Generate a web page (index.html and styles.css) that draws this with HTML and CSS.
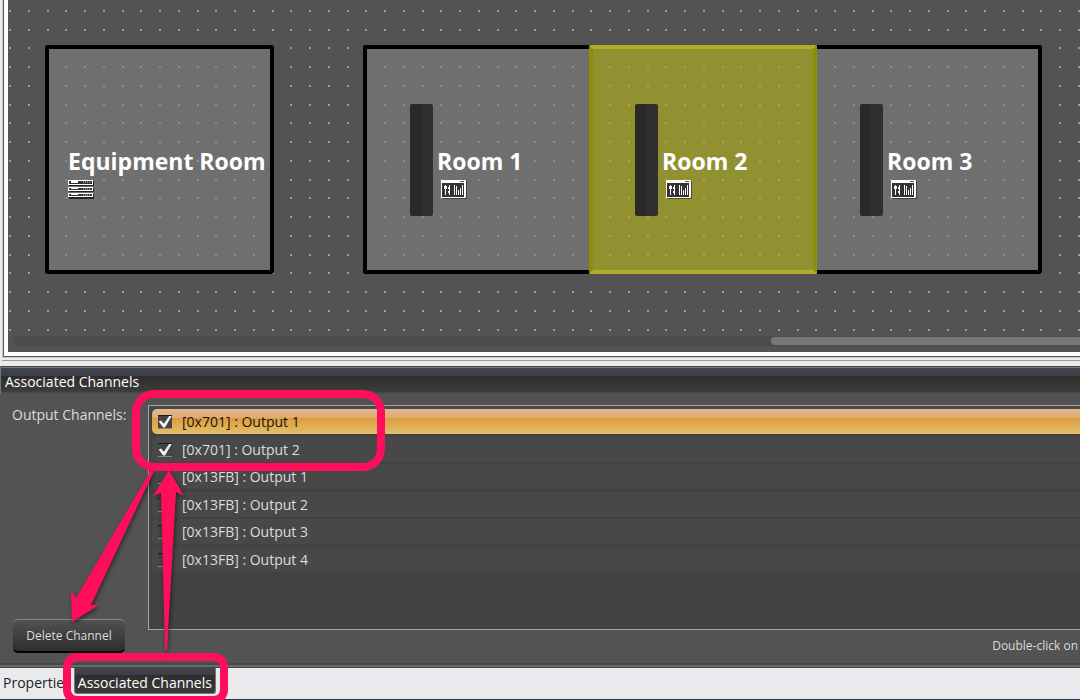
FILE: index.html
```
<!DOCTYPE html>
<html lang="en">
<head>
  <meta charset="UTF-8" />
  <meta name="viewport" content="width=device-width, initial-scale=1.0"/>
  <title>Associated Channels</title>
  <link rel="stylesheet" href="styles.css">
</head>
<body>
  <svg class="defs" width="0" height="0" aria-hidden="true">
    <symbol id="mixer" viewBox="0 0 26 20">
      <rect x="1" y="1" width="25" height="18" rx="1" fill="#222" opacity=".6"/>
      <rect width="25" height="18" rx="1" fill="#fff"/>
      <path d="M1 3h22v14H1z" fill="#333"/>
      <path d="M19 1h4v1h-4z" fill="#555"/>
      <path d="M4 5h1v10H4zM3 6h3v3H3zM8 5h1v10H8zM7 7h2v2H7zM7 11h2v2H7zM13 5h1v10h-1zM15 6h1v9h-1zM17 10h1v5h-1zM19 8h1v7h-1zM21 5h1v10h-1z" fill="#fff"/>
    </symbol>
    <symbol id="rack" viewBox="0 0 26 20">
      <path d="M1 1h25v5H1zM1 8h25v4H1zM1 14h25v5H1z" fill="#222"/>
      <path d="M0 0h25v5H0zM0 7h25v4H0zM0 13h25v4H0z" fill="#fff"/>
      <path d="M1 1h23v3H1zM1 8h23v2H1zM1 14h23v2H1z" fill="#333"/>
      <path d="M3 1h7v2H3zM3 8h7v1H3zM3 14h7v1H3z" fill="#fff"/>
      <path d="M15 2h8M15 9h8M15 15h8" stroke="#ddd" stroke-dasharray="1 1"/>
    </symbol>
  </svg>

  <main class="app">
    <section class="canvas-frame">
      <div class="canvas">
        <svg class="grid" width="100%" height="336" aria-hidden="true">
          <defs>
            <pattern id="dots" x="1" y="10" width="75" height="75" patternUnits="userSpaceOnUse">
              <g id="dot-row" fill="#9c9c9c">
                <rect x="0" width="2" height="2"/>
                <rect x="19" width="2" height="2"/>
                <rect x="38" width="2" height="2"/>
                <rect x="56" width="2" height="2"/>
              </g>
              <use href="#dot-row" y="19"/>
              <use href="#dot-row" y="37"/>
              <use href="#dot-row" y="56"/>
            </pattern>
          </defs>
          <rect width="100%" height="100%" fill="url(#dots)"/>
        </svg>

        <div class="room equipment">
          <h2>Equipment Room</h2>
          <svg class="icon"><use href="#rack"/></svg>
        </div>
        <div class="room room-1">
          <div class="device"></div>
          <div class="label">
            <h2>Room 1</h2>
            <svg class="icon"><use href="#mixer"/></svg>
          </div>
        </div>
        <div class="room room-2 selected">
          <div class="device"></div>
          <div class="label">
            <h2>Room 2</h2>
            <svg class="icon"><use href="#mixer"/></svg>
          </div>
        </div>
        <div class="room room-3">
          <div class="device"></div>
          <div class="label">
            <h2>Room 3</h2>
            <svg class="icon"><use href="#mixer"/></svg>
          </div>
        </div>

        <div class="scrollbar"><div class="thumb"></div></div>
      </div>
    </section>

    <section class="panel">
      <h1>Associated Channels</h1>
      <div class="panel-body">
        <div class="side">
          <span id="channels-label">Output Channels:</span>
          <button class="delete-btn">Delete Channel</button>
        </div>
        <div class="channels">
          <ul class="list" aria-labelledby="channels-label">
            <li class="active"><label><input type="checkbox" checked>[0x701] : Output 1</label></li>
            <li><label><input type="checkbox" checked>[0x701] : Output 2</label></li>
            <li><label><input type="checkbox">[0x13FB] : Output 1</label></li>
            <li><label><input type="checkbox">[0x13FB] : Output 2</label></li>
            <li><label><input type="checkbox">[0x13FB] : Output 3</label></li>
            <li><label><input type="checkbox">[0x13FB] : Output 4</label></li>
          </ul>
          <p class="hint">Double-click on</p>
        </div>
      </div>
    </section>

    <nav class="tabs">
      <button class="tab">Properties</button>
      <button class="tab current">Associated Channels</button>
    </nav>

    <!-- callouts over the panel -->
    <svg class="callouts" width="400" height="320" viewBox="0 385 400 320" aria-hidden="true">
      <g class="outline">
        <rect x="136" y="394" width="245" height="73" rx="18"/>
        <rect x="67" y="657" width="157" height="43" rx="10"/>
      </g>
      <g class="arrow">
        <path d="M151 470L154 471L91 605L99 605L72 622L71 591L76 598z"/>
        <path d="M169 470L184 496L176 492L167 650L165 650L161 493L153 496z"/>
      </g>
    </svg>
  </main>
</body>
</html>
```
FILE: styles.css
```
* {
  box-sizing: border-box;
}

body {
  margin: 0;
  background: #535353;
  color: #dcdcdc;
  font-family: "Open Sans", "Noto Sans", sans-serif;
  font-size: 14px;
  line-height: 20px;
}

h1, h2, p, ul {
  margin: 0;
  padding: 0;
}

button {
  font: inherit;
  cursor: pointer;
}

.defs {
  position: absolute;
}

.app {
  position: relative;
  display: flex;
  flex-direction: column;
  height: 100vh;
  overflow: hidden;
}

/* design canvas */
.canvas-frame {
  flex: none;
  padding: 0 0 5px 4px;
  background: linear-gradient(#c8c8c8, #c8c8c8 358px, #ececec 358px, #ececec 360px, #999 360px);
  box-shadow: inset 2px 0 #ececec;
}

.canvas {
  position: relative;
  height: 356px;
  background: #535353;
  border: solid #fff;
  border-width: 0 0 4px 4px;
  outline: 1px solid #555;
  overflow: hidden;
}

.grid {
  position: absolute;
  top: 0;
  left: 0;
}

.room {
  position: absolute;
  top: 45px;
  width: 229px;
  height: 229px;
  border: 4px solid #000;
  border-radius: 3px;
  background: rgba(130, 130, 130, 0.6);
}

.room h2 {
  color: #fff;
  font-size: 23px;
  font-weight: bold;
  line-height: 32px;
  white-space: nowrap;
}

.equipment {
  left: 37px;
  padding: 96px 0 0 19px;
}

.room-1, .room-2, .room-3 {
  display: flex;
  padding: 55px 0 0 43px;
}

.room-1 {
  left: 355px;
  width: 226px;
  border-right: 0;
  border-radius: 3px 0 0 3px;
}

.room-2 {
  left: 581px;
  width: 228px;
  padding-left: 42px;
}

.room-3 {
  left: 809px;
  width: 225px;
  border-left: 0;
  border-radius: 0 3px 3px 0;
}

.selected {
  border: 4px solid #a9a91c;
  border-color: #b0b022 #8e8e0a;
  background: rgba(173, 173, 37, 0.7);
}

.device {
  width: 23px;
  height: 112px;
  margin-right: 4px;
  border-radius: 2px;
  background: linear-gradient(90deg, #292929 50%, #303030 50%);
}

.label {
  padding-top: 41px;
}

.icon {
  display: block;
  width: 26px;
  height: 20px;
  margin-top: 3px;
}

.label .icon {
  margin-left: 4px;
}

.scrollbar {
  position: absolute;
  left: 6px;
  right: 0;
  bottom: 6px;
  height: 10px;
  padding: 1px 0;
  border-radius: 4px 0 0 4px;
  background: #4b4b4b;
}

.thumb {
  width: 29%;
  height: 8px;
  margin-left: auto;
  border-radius: 4px 0 0 4px;
  background: #777;
}

/* associated channels panel */
.panel {
  flex: 1;
  display: flex;
  flex-direction: column;
  border-top: 5px solid #e9eaee;
  border-bottom: 1px solid #444;
  box-shadow: inset 0 -2px #6b6b6b, inset 0 -4px #484848;
}

.panel h1 {
  height: 28px;
  padding: 5px 4px 0;
  border-top: 1px solid #444;
  border-left: 1px solid #777;
  background: linear-gradient(#777 1px, #42444f 1px, #3b3d49 9px, #2d2d2c 9px, #3b3b39 24px, #535353);
  color: #fff;
  font-size: 14px;
  font-weight: normal;
  line-height: 20px;
}

.panel-body {
  flex: 1;
  display: flex;
  padding-top: 11px;
}

.side {
  flex: none;
  display: flex;
  flex-direction: column;
  justify-content: space-between;
  width: 148px;
  padding: 0 23px 14px 12px;
  white-space: nowrap;
}

.delete-btn {
  height: 34px;
  margin-left: 1px;
  padding: 0;
  border: solid;
  border-width: 1px 0 2px;
  border-color: #888 transparent #000;
  border-radius: 5px;
  background: linear-gradient(#515151, #2e2e2e);
  color: #dcdcdc;
  font-size: 12px;
}

.channels {
  flex: 1;
  display: flex;
  flex-direction: column;
}

.list {
  flex: 1;
  padding: 3px 0 0 3px;
  border: 1px solid #a5a5a5;
  border-right: 0;
  background: linear-gradient(#4b4b4b, #424242 8px);
  list-style: none;
}

.list li {
  height: 25px;
  margin-bottom: 2px;
  border-radius: 5px 0 0 5px;
  background: #484848;
}

.list li:nth-child(odd) {
  margin-bottom: 3px;
}

.list .active {
  background: linear-gradient(#e2b98e, #e0ab72 9px, #df9b40 9px, #e0c069);
  color: #1c1408;
}

.list label {
  display: flex;
  align-items: center;
  gap: 10px;
  height: 25px;
  padding-left: 6px;
}

.list input {
  appearance: none;
  width: 14px;
  height: 14px;
  margin: 0;
  border-top: 1px solid #1c1c1c;
  border-bottom: 1px solid #888;
  background: #444;
}

/* tick mark */
.list input:checked::before {
  content: "";
  display: block;
  height: 12px;
  background: #f2f2f2;
  clip-path: polygon(5% 50%, 22% 42%, 42% 68%, 82% 0, 100% 0, 50% 100%, 36% 100%);
}

.hint {
  height: 37px;
  padding: 6px 2px 0;
  font-size: 12px;
  text-align: right;
}

/* bottom tabs */
.tabs {
  flex: none;
  display: flex;
  height: 32px;
  background: #e9eaee;
  border-bottom: 1px solid #273442;
}

.tab {
  height: 26px;
  padding: 4px 3px 0;
  border: 0;
  background: none;
  color: #222;
}

.tab.current {
  padding: 4px 3px 0;
  border: solid #777;
  border-width: 0 1px 1px;
  border-radius: 0 0 3px 3px;
  background: linear-gradient(#42444f, #3b3d49 7px, #2d2d2c 7px, #3b3b39);
  color: #fff;
}

.callouts {
  position: absolute;
  left: 0;
  top: 385px;
  pointer-events: none;
}

.outline {
  fill: none;
  stroke: #ff0f5b;
  stroke-width: 8;
}

.arrow {
  fill: #ff0f5b;
  filter: drop-shadow(1px 2px 2px rgba(0, 0, 0, 0.5));
}
```
